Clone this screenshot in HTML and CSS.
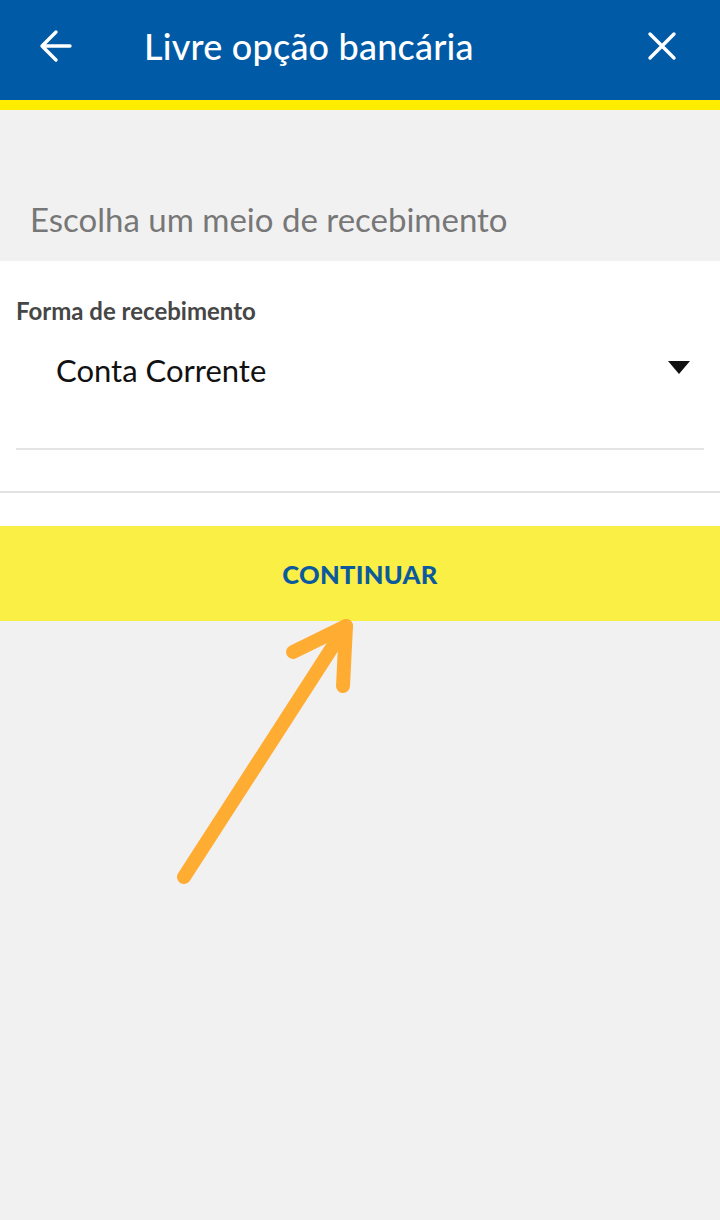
FILE: index.html
```html
<!DOCTYPE html>
<html lang="pt">
<head>
    <meta charset="UTF-8">
    <meta name="viewport" content="width=device-width, initial-scale=1.0">
    <title>Livre opção bancária</title>
    <link rel="stylesheet" href="styles.css">
</head>
<body>
    <header class="topbar">
        <button class="icon-btn" aria-label="Voltar">
            <svg width="34" height="34" viewBox="0 0 34 34">
                <path d="M31 17H4M17 3L3 17l14 14" fill="none" stroke="#fff" stroke-width="3.4" stroke-linecap="round" stroke-linejoin="round"/>
            </svg>
        </button>
        <h1 class="title">Livre opção bancária</h1>
        <button class="icon-btn close" aria-label="Fechar">
            <svg width="30" height="30" viewBox="0 0 30 30">
                <path d="M3 3l24 24M27 3L3 27" fill="none" stroke="#fff" stroke-width="3.4" stroke-linecap="round"/>
            </svg>
        </button>
    </header>

    <div class="subtitle">Escolha um meio de recebimento</div>

    <section class="form-card">
        <label class="field-label">Forma de recebimento</label>
        <div class="select">
            <span class="select-value">Conta Corrente</span>
            <span class="caret"></span>
        </div>
    </section>

    <div class="spacer"></div>

    <button class="continue-btn">CONTINUAR</button>

    <!-- seta de destaque -->
    <svg class="hint-arrow" width="720" height="1220" viewBox="0 0 720 1220">
        <g fill="none" stroke="#ffac33" stroke-width="14" stroke-linecap="round" stroke-linejoin="round">
            <path d="M184 877L346 626"/>
            <path d="M293 652L346 626L343 686"/>
        </g>
    </svg>
</body>
</html>
```

FILE: styles.css
```css
body {
    margin: 0;
    font-family: Lato, 'Open Sans', sans-serif;
    background-color: #f1f1f1;
    min-height: 1220px;
    position: relative;
}

.topbar {
    height: 92px;
    background: #005aa5;
    border-bottom: 10px solid #ffed00;
    display: flex;
    align-items: center;
    padding: 0 38px 8px 36px;
    margin: 0;
}

.icon-btn {
    background: none;
    border: none;
    padding: 0;
    width: 40px;
    height: 40px;
    display: flex;
    align-items: center;
    justify-content: center;
}

.title {
    flex: 1;
    margin: 0 0 0 68px;
    color: #fff;
    font-size: 36px;
    font-weight: 500;
    letter-spacing: 0.2px;
}

.subtitle {
    height: 151px;
    box-sizing: border-box;
    padding: 89px 0 0 30px;
    font-size: 33px;
    color: #777;
}

.form-card {
    background: #fff;
    padding: 35px 16px 0 16px;
    border-bottom: 2px solid #e2e2e2;
    height: 232px;
    box-sizing: border-box;
}

.field-label {
    display: block;
    font-size: 24px;
    line-height: 29px;
    font-weight: 700;
    color: #464646;
}

.select {
    display: flex;
    justify-content: space-between;
    align-items: flex-start;
    padding: 26px 14px 0 40px;
    height: 125px;
    box-sizing: border-box;
    border-bottom: 2px solid #e4e4e4;
}

.select-value {
    font-size: 31px;
    line-height: 38px;
    color: #111;
}

.caret {
    margin-top: 10px;
    width: 0;
    height: 0;
    border-left: 11px solid transparent;
    border-right: 11px solid transparent;
    border-top: 13px solid #111;
}

.spacer {
    height: 33px;
    background: #fff;
}

.continue-btn {
    display: block;
    width: 100%;
    height: 95px;
    border: none;
    background: #f9ef45;
    color: #0b5a9e;
    font-family: Lato, sans-serif;
    font-size: 25.5px;
    font-weight: 900;
    letter-spacing: 0.3px;
}

.hint-arrow {
    position: absolute;
    top: 0;
    left: 0;
    pointer-events: none;
}
```
